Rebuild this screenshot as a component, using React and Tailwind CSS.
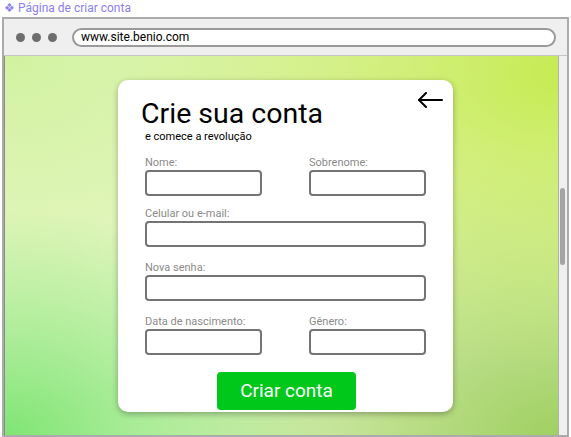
import { useState } from 'react';

const Field = ({ label }) => (
    <div>
        <div className="text-[11px] leading-[13px] text-[#8a8a8a]">{label}</div>
        <div className="mt-[1px] h-[26px] border-2 border-[#747474] rounded-[4px] bg-white"></div>
    </div>
);

const App = () => {
    const [url] = useState('www.site.benio.com');

    return (
        <div className="w-[571px] h-[437px] bg-white overflow-hidden font-['Roboto',sans-serif]">
            {/* Page label */}
            <div className="h-[17px] pl-[4px] text-[12px] leading-[16px] text-[#8c80f0]">❖ Página de criar conta</div>

            {/* Browser frame */}
            <div className="ml-[2px] w-[567px] h-[420px] border-2 border-[#ababab] bg-[#efefef] flex flex-col">
                {/* Toolbar */}
                <div className="h-[36px] flex items-center pl-[12px] pr-[11px] shrink-0">
                    <div className="flex gap-[7px]">
                        <span className="w-[9px] h-[9px] rounded-full bg-[#6d6d6d]"></span>
                        <span className="w-[9px] h-[9px] rounded-full bg-[#6d6d6d]"></span>
                        <span className="w-[9px] h-[9px] rounded-full bg-[#6d6d6d]"></span>
                    </div>
                    <div className="ml-[15px] flex-1 h-[19px] border-2 border-[#9a9a9a] rounded-full bg-white pl-[7px] text-[12px] leading-[15px] text-black">
                        {url}
                    </div>
                </div>

                {/* Viewport */}
                <div className="flex-1 flex border-t border-[#c4c4c4]">
                    <div className="flex-1 border-l border-[#8a8a8a] border-r border-r-[#b0b0b0] pt-[24px] pl-[113px] bg-[radial-gradient(ellipse_at_0%_100%,#7fe574_0%,transparent_42%),radial-gradient(ellipse_at_100%_5%,#c6eb52_0%,transparent_58%),radial-gradient(ellipse_at_100%_100%,#a0d062_0%,transparent_55%),radial-gradient(ellipse_at_0%_0%,#d2f2a0_0%,transparent_60%),linear-gradient(#e9f7cc,#e9f7cc)]">
                        {/* Card */}
                        <div className="relative w-[335px] h-[332px] rounded-[10px] bg-white shadow-[0_2px_6px_rgba(0,0,0,0.3)] pt-[18px] pl-[27px]">
                            <button className="absolute right-[10px] top-[12px] text-black">
                                <svg width="26" height="16" viewBox="0 0 26 16" fill="none" stroke="currentColor" strokeWidth="2" strokeLinecap="round" strokeLinejoin="round">
                                    <path d="M25 8H2" />
                                    <path d="M9 1L2 8L9 15" />
                                </svg>
                            </button>

                            <h1 className="-ml-[4px] text-[28.5px] leading-[32px] text-black">Crie sua conta</h1>
                            <p className="text-[11px] leading-[13px] text-black">e comece a revolução</p>

                            <div className="w-[281px]">
                                <div className="mt-[13px] grid grid-cols-2 gap-x-[47px]">
                                    <Field label="Nome:" />
                                    <Field label="Sobrenome:" />
                                </div>
                                <div className="mt-[11px]">
                                    <Field label="Celular ou e-mail:" />
                                </div>
                                <div className="mt-[14px]">
                                    <Field label="Nova senha:" />
                                </div>
                                <div className="mt-[14px] grid grid-cols-2 gap-x-[47px]">
                                    <Field label="Data de nascimento:" />
                                    <Field label="Gênero:" />
                                </div>
                            </div>

                            <button className="mt-[17px] ml-[72px] w-[139px] h-[38px] rounded-[4px] bg-[#00c81a] text-white text-[19px] leading-[38px]">
                                Criar conta
                            </button>
                        </div>
                    </div>

                    {/* Scrollbar */}
                    <div className="w-[8px] bg-[#efefef] pt-[132px]">
                        <div className="ml-[1px] w-[5px] h-[77px] rounded-full bg-[#a4a4a4]"></div>
                    </div>
                </div>
            </div>
        </div>
    );
};

export default App;
